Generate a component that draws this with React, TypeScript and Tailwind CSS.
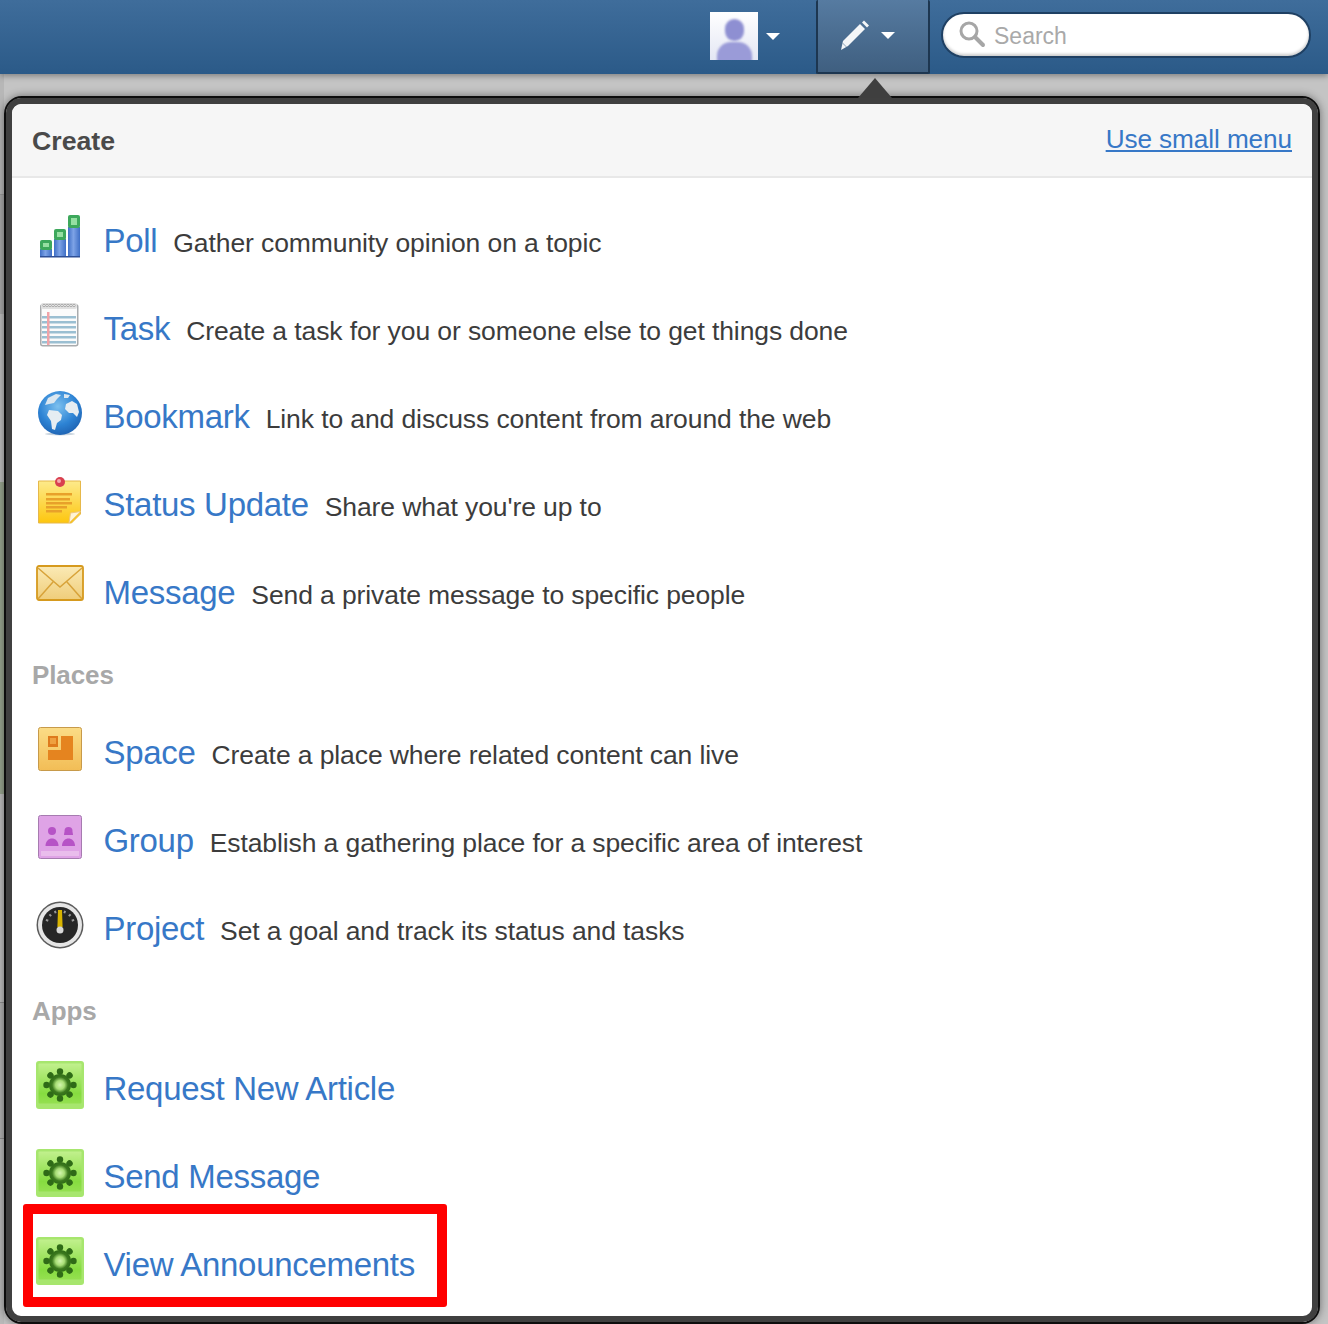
import React from "react";

const font = { fontFamily: '"Liberation Sans", Arial, sans-serif' };

function Poll() {
  return (
    <svg width="48" height="48" viewBox="0 0 48 48" className="blur-[0.5px]">
      <defs>
        <linearGradient id="pollBar" x1="0" y1="0" x2="1" y2="0">
          <stop offset="0" stopColor="#3f6fc6" />
          <stop offset="0.45" stopColor="#7ea3e6" />
          <stop offset="1" stopColor="#3f6fc6" />
        </linearGradient>
      </defs>
      {[[4, 27, 10], [18, 16, 11], [32, 2, 13]].map(([x, y, h], i) => (
        <g key={i}>
          <rect x={x} y={y + h - 1} width="12" height={44 - y - h + 1} fill="url(#pollBar)" />
          <rect x={x} y={y} width="12" height={h} rx="2" fill="#3da85c" />
          <rect x={x + 3} y={y + 3} width="6" height={h - 6} fill="#96dfa2" />
        </g>
      ))}
      <rect x="4" y="43" width="40" height="1.500" fill="#2e4f96" />
    </svg>
  );
}

function Task() {
  return (
    <svg width="48" height="48" viewBox="0 0 48 48" className="blur-[0.5px]">
      <rect x="4.750" y="3.750" width="37" height="41" rx="2" fill="#fbfbfb" stroke="#a9abad" strokeWidth="1.500" />
      <rect x="5" y="2" width="36" height="6" rx="2" fill="#e0e0e0" />
      {[0, 1, 2, 3, 4, 5, 6, 7, 8, 9, 10].map((i) => (
        <circle key={i} cx={8 + i * 3} cy="4.500" r="1.200" fill="#f8f8f8" stroke="#8f8f8f" strokeWidth="0.700" />
      ))}
      {[15, 20, 25, 30, 35, 40].map((y) => (
        <rect key={y} x="6" y={y} width="34" height="2.500" fill="#9bbfd2" />
      ))}
      <rect x="11" y="11" width="2.500" height="33" fill="#f0a3a8" />
    </svg>
  );
}

function Globe() {
  return (
    <svg width="48" height="48" viewBox="0 0 48 48" className="blur-[0.5px]">
      <defs>
        <radialGradient id="globeFill" cx="45%" cy="35%" r="70%">
          <stop offset="0" stopColor="#7cc0ef" />
          <stop offset="0.6" stopColor="#2d83d4" />
          <stop offset="1" stopColor="#1d5fae" />
        </radialGradient>
      </defs>
      <ellipse cx="24" cy="45" rx="15" ry="1.500" fill="#c9d4de" />
      <circle cx="24" cy="24" r="22" fill="url(#globeFill)" />
      <path d="M12 9l8-4 5 1-4 4-3 4-5 1-4 1z" fill="#dbe7f0" />
      <path d="M13 21l9 1 4 4-1 5-4 3-2 7-3-1-1-8-4-6z" fill="#e6edf2" />
      <path d="M30 15l6-3 5 3 2 8-2 5-4-4-4 0-4-4z" fill="#e6edf2" />
      <path d="M28 5l6 1-2 3-4 0z" fill="#dbe7f0" />
    </svg>
  );
}

function Note() {
  return (
    <svg width="48" height="48" viewBox="0 0 48 48" className="blur-[0.5px]">
      <defs>
        <linearGradient id="noteFill" x1="0" y1="0" x2="0" y2="1">
          <stop offset="0" stopColor="#fdea8b" />
          <stop offset="1" stopColor="#fdc60e" />
        </linearGradient>
      </defs>
      <path d="M2.500 4h42v33l-9 9h-33z" fill="url(#noteFill)" stroke="#e6b84a" strokeWidth="1" />
      {[[16, 26], [21, 24], [25, 26], [29, 21], [33, 16]].map(([y, w]) => (
        <rect key={y} x="10" y={y} width={w} height="2.500" fill="#e8a12a" />
      ))}
      <path d="M33 46l1.500-10 10-1.500z" fill="#fff4d4" stroke="#eec77e" strokeWidth="1" />
      <circle cx="24" cy="5" r="5" fill="#d9404f" />
      <circle cx="23" cy="4" r="2" fill="#f6a7ab" />
    </svg>
  );
}

function Mail() {
  return (
    <svg width="48" height="48" viewBox="0 0 48 48" className="blur-[0.4px]">
      <defs>
        <linearGradient id="mailFill" x1="0" y1="0" x2="0" y2="1">
          <stop offset="0" stopColor="#fbeab5" />
          <stop offset="1" stopColor="#efcd7a" />
        </linearGradient>
      </defs>
      <rect x="1" y="1" width="46" height="34" rx="2" fill="url(#mailFill)" stroke="#d69a1e" strokeWidth="1.800" />
      <path d="M2 3l22 19L46 3M2 34l15-17M46 34L31 17" fill="none" stroke="#d8a33a" strokeWidth="1.500" />
    </svg>
  );
}

function Space() {
  return (
    <svg width="48" height="48" viewBox="0 0 48 48" className="blur-[0.5px]">
      <defs>
        <linearGradient id="spaceFill" x1="0" y1="0" x2="0" y2="1">
          <stop offset="0" stopColor="#fbdc86" />
          <stop offset="1" stopColor="#f2bd56" />
        </linearGradient>
      </defs>
      <rect x="2.500" y="2.500" width="43" height="43" rx="2" fill="url(#spaceFill)" stroke="#c79a4a" strokeWidth="1" />
      <rect x="12" y="11" width="10" height="11" fill="#de7a1c" />
      <rect x="14" y="13" width="6" height="6" fill="#eea040" />
      <path d="M25 11h12v24H12V25h13z" fill="#e5841f" />
    </svg>
  );
}

function Group() {
  return (
    <svg width="48" height="48" viewBox="0 0 48 48" className="blur-[0.5px]">
      <rect x="2.500" y="2.500" width="43" height="43" rx="2" fill="#dfa3e6" stroke="#a67bb0" strokeWidth="1" />
      <rect x="5" y="38" width="38" height="5" fill="#e9bdec" />
      <circle cx="16" cy="18" r="4" fill="#b653c6" />
      <path d="M28 22c0-7 9-7 9 0z" fill="#b653c6" />
      <circle cx="32.500" cy="18" r="4" fill="#b653c6" />
      <path d="M9.500 33c0-10 13-10 13 0z" fill="#b653c6" />
      <path d="M26 33c0-10 13-10 13 0z" fill="#b653c6" />
    </svg>
  );
}

function Gauge() {
  return (
    <svg width="48" height="48" viewBox="0 0 48 48" className="blur-[0.5px]">
      <circle cx="24" cy="24" r="23.500" fill="#5c5c5c" />
      <circle cx="24" cy="24" r="22" fill="#e6e6e6" />
      <circle cx="24" cy="24" r="18" fill="#262626" />
      {[-70, -45, -20, 20, 45, 70].map((a) => (
        <rect key={a} x="23" y="9" width="2" height="2.500" fill="#999" transform={`rotate(${a} 24 24)`} />
      ))}
      <path d="M22 9h4l.6 17h-5.200z" fill="#d9b400" />
      <circle cx="24" cy="29" r="3.500" fill="#d8d8d8" />
    </svg>
  );
}

function Gear() {
  const teeth = [0, 45, 90, 135, 180, 225, 270, 315];
  return (
    <svg width="48" height="48" viewBox="0 0 48 48" className="blur-[0.5px]">
      <defs>
        <linearGradient id="gearFill" x1="0" y1="0" x2="0" y2="1">
          <stop offset="0" stopColor="#c1f08d" />
          <stop offset="0.75" stopColor="#86dc40" />
          <stop offset="1" stopColor="#94e050" />
        </linearGradient>
        <radialGradient id="gearCore">
          <stop offset="0" stopColor="#d3f5ae" />
          <stop offset="0.4" stopColor="#a8de76" />
          <stop offset="0.72" stopColor="#3c7a1e" />
          <stop offset="1" stopColor="#2f6b17" />
        </radialGradient>
      </defs>
      <rect width="48" height="48" rx="3" fill="#a7e66e" />
      <rect x="2.500" y="2.500" width="43" height="40" rx="1" fill="url(#gearFill)" />
      {teeth.map((a) => (
        <circle key={a} cx="24" cy="10.500" r="3.200" fill="#2f6b17" transform={`rotate(${a} 24 24)`} />
      ))}
      <circle cx="24" cy="24" r="11" fill="url(#gearCore)" />
    </svg>
  );
}

function Row({ icon, title, desc }: { icon: React.ReactNode; title: string; desc?: string }) {
  return (
    <div className="flex h-[88px] items-center pl-6">
      <div className="mb-[6px] flex h-12 w-12 shrink-0 items-center justify-center">{icon}</div>
      <a className="ml-[19.500px] mt-[1px] whitespace-nowrap text-[33px] leading-none tracking-[-0.3px] text-[#3778c7]">{title}</a>
      {desc && <span className="ml-4 mt-[6px] whitespace-nowrap text-[26.500px] leading-none tracking-[-0.1px] text-[#3c3c3c]">{desc}</span>}
    </div>
  );
}

function SectionTitle({ children }: { children: React.ReactNode }) {
  return <div className="flex h-[72px] items-center pl-5 pt-[6px] text-[26px] font-bold tracking-[-0.1px] text-[#a8a8a8]">{children}</div>;
}

function BackdropStrip() {
  return (
    <div className="absolute left-0 top-[74px] flex h-[1250px] w-1 flex-col">
      <div className="h-[120px] bg-[#b7b7b7]" />
      <div className="h-[120px] border-t border-[#9a9a9a] bg-[#a9a9a9]" />
      <div className="h-[168px] bg-[#bdbdbd]" />
      <div className="h-[312px] bg-[#98a58f]" />
      <div className="h-[208px] bg-[#bdbdbd]" />
      <div className="h-[136px] border-t border-[#8f8f8f] bg-[#b2b2b2]" />
      <div className="flex-1 border-t border-[#8f8f8f] bg-[#bababa]" />
    </div>
  );
}

export default function App() {
  return (
    <div className="relative h-[1324px] w-[1328px] overflow-hidden bg-[#c4c4c4]" style={font}>
      <BackdropStrip />
      <header className="relative flex h-[74px] items-stretch justify-end bg-gradient-to-b from-[#3f6d9b] to-[#2b5a88] shadow-[0_2px_6px_rgba(0,0,0,0.35)]">
        <div className="flex items-center pb-[2px] pr-[36px]">
          <div className="relative h-12 w-12 overflow-hidden bg-gradient-to-b from-[#ffffff] to-[#e4e7f4]">
            <div className="absolute left-[15px] top-[7px] h-[22px] w-[19px] rounded-full bg-[#8e8fd2] blur-[1px]" />
            <div className="absolute left-[7px] top-[30px] h-[22px] w-[35px] rounded-t-[14px] bg-[#9a9bd8] blur-[1px]" />
          </div>
          <div className="ml-[8px] h-0 w-0 border-x-[7px] border-t-[7px] border-x-transparent border-t-white" />
        </div>
        <div className="flex w-[114px] items-center rounded-[2px] border-2 border-t-0 border-[#1d3650] bg-gradient-to-b from-[#567ba1] to-[#3f5f80] pb-[2px] pl-[21px]">
          <svg width="32" height="32" viewBox="0 0 32 32" className="mr-[10px]">
            <path d="M2 31l2-9L21 5l5 5L9 27z" fill="#f4f6f8" />
            <path d="M3.500 24l4 4" stroke="#8aa2b8" strokeWidth="1" />
            <path d="M23 3.500l2-2 5 5-2 2z" fill="#f4f6f8" />
          </svg>
          <div className="h-0 w-0 border-x-[7px] border-t-[7px] border-x-transparent border-t-white" />
        </div>
        <div className="flex items-center pb-[4px] pl-[11px] pr-[17px]">
          <div className="flex h-[46px] w-[370px] items-center rounded-full border-2 border-[#1f4063] bg-white pl-[15px] shadow-[inset_0_-2px_3px_rgba(0,0,0,0.2)]">
            <svg width="28" height="28" viewBox="0 0 28 28" className="mb-[2px]">
              <circle cx="11" cy="11" r="8" fill="none" stroke="#a6a6a6" strokeWidth="3" />
              <path d="M17 17l8 8" stroke="#a6a6a6" strokeWidth="4" strokeLinecap="round" />
            </svg>
            <span className="ml-[8px] pt-[2px] text-[23px] leading-none text-[#a9a9a9]">Search</span>
          </div>
        </div>
      </header>

      <div className="absolute left-[858px] top-[78px] z-10 h-0 w-0 border-x-[17px] border-b-[20px] border-x-transparent border-b-[#3f3f3f]" />

      <main className="relative ml-1 mr-2 mt-[22px] h-[1228px] rounded-[18px] border-2 border-[#0d0d0d] bg-white shadow-[0_0_8px_rgba(0,0,0,0.45)]">
        <div className="h-full rounded-[15px] border-[6px] border-[#404040] bg-white">
          <div className="flex h-[74px] items-center justify-between rounded-t-[10px] border-b-2 border-[#e8e8e8] bg-[#f6f6f6] pl-5 pr-5">
            <h2 className="pt-[2px] text-[26.700px] font-bold text-[#4a4a4a]">Create</h2>
            <a className="text-[26.200px] tracking-[-0.1px] text-[#3778c7] underline">Use small menu</a>
          </div>
          <div className="pt-[18px]">
            <Row icon={<Poll />} title="Poll" desc="Gather community opinion on a topic" />
            <Row icon={<Task />} title="Task" desc="Create a task for you or someone else to get things done" />
            <Row icon={<Globe />} title="Bookmark" desc="Link to and discuss content from around the web" />
            <Row icon={<Note />} title="Status Update" desc="Share what you're up to" />
            <Row icon={<Mail />} title="Message" desc="Send a private message to specific people" />
            <SectionTitle>Places</SectionTitle>
            <Row icon={<Space />} title="Space" desc="Create a place where related content can live" />
            <Row icon={<Group />} title="Group" desc="Establish a gathering place for a specific area of interest" />
            <Row icon={<Gauge />} title="Project" desc="Set a goal and track its status and tasks" />
            <SectionTitle>Apps</SectionTitle>
            <Row icon={<Gear />} title="Request New Article" />
            <Row icon={<Gear />} title="Send Message" />
            <div className="relative">
              <Row icon={<Gear />} title="View Announcements" />
              <div className="absolute left-[11px] top-[-16px] h-[103px] w-[424px] rounded-[3px] border-[10px] border-[#ff0000]" />
            </div>
          </div>
        </div>
      </main>
    </div>
  );
}
